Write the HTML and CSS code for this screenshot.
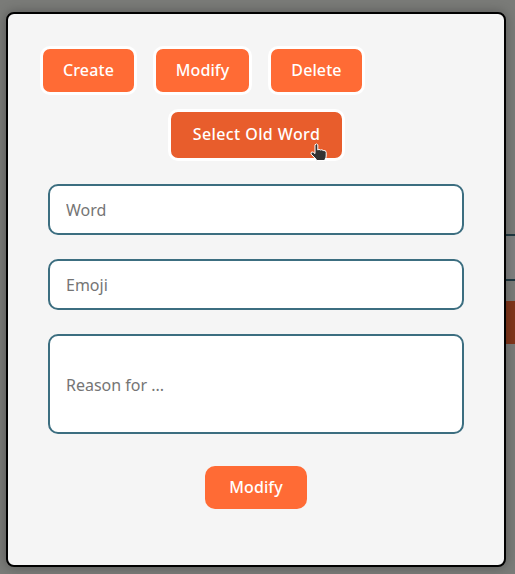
FILE: index.html
```html
<!DOCTYPE html>
<html lang="en">
<head>
<meta charset="utf-8">
<title>Modify word</title>
<link rel="stylesheet" href="styles.css">
</head>
<body>
<main class="dialog">
  <nav class="tabs">
    <button class="btn create">Create</button>
    <button class="btn modify">Modify</button>
    <button class="btn delete">Delete</button>
  </nav>
  <button class="btn select">Select Old Word
    <svg class="pointer" width="18" height="20" viewBox="0 0 18 20"><path d="M5 1.8Q6.5-.1 7.8 1.8V7Q9 5.7 10.3 7Q12 6.2 13.2 7.5Q16.2 7 16.2 9.5V13Q16.2 15 15 16.2V17.5H6.2V16.3L1.1 11.1Q.4 9.5 2 8.9Q3.4 8.9 5 10.6Z" fill="#333" stroke="#fff" stroke-linejoin="round"/></svg>
  </button>
  <form class="form">
    <input class="field" placeholder="Word">
    <input class="field" placeholder="Emoji">
    <input class="field tall" placeholder="Reason for ...">
    <button class="btn submit" type="button">Modify</button>
  </form>
</main>
<aside class="behind">
  <div class="behind-field"></div>
  <div class="behind-button"></div>
</aside>
</body>
</html>
```
FILE: styles.css
```css
* { box-sizing: border-box; }
body {
  margin: 0;
  height: 574px;
  padding: 12px 0 0 6px;
  display: flex;
  overflow: hidden;
  background: #7a7b78;
  font-family: "Noto Sans", sans-serif;
}
.dialog {
  position: relative;
  z-index: 1;
  flex: none;
  width: 500px;
  height: 555px;
  padding: 32px 40px 0;
  border: 2px solid #000;
  border-radius: 8px;
  background: #f5f5f5;
  box-shadow: 0 0 12px rgba(0, 0, 0, .3);
  display: flex;
  flex-direction: column;
  align-items: center;
}
.tabs {
  display: flex;
  gap: 16px;
  align-self: flex-start;
  margin-left: -8px;
}
.btn {
  height: 49px;
  padding: 0 0 2px;
  border: 3px solid #fff;
  border-radius: 10px;
  background: #ff6b35;
  color: #fff;
  font: 550 16px/22px "Noto Sans", sans-serif;
  letter-spacing: .1px;
  white-space: nowrap;
}
.create { width: 97px; }
.modify { width: 99px; }
.delete { width: 97px; }
.select {
  position: relative;
  width: 177px;
  height: 52px;
  margin-top: 14px;
  margin-left: 1px;
  background: #e85d2c;
  letter-spacing: .4px;
}
.pointer { position: absolute; left: 139px; top: 31px; }
.form {
  width: 416px;
  margin-top: 23px;
  display: flex;
  flex-direction: column;
  gap: 24px;
}
.field {
  width: 100%;
  height: 51px;
  padding: 0 16px;
  border: 2px solid #3c6e80;
  border-radius: 10px;
  background: #fff;
  font: 16px "Noto Sans", sans-serif;
}
.field::placeholder { color: #757575; opacity: 1; }
.tall { height: 100px; padding-top: 2px; }
.submit {
  width: 102px;
  height: 43px;
  margin-top: 8px;
  align-self: center;
  border: 0;
}
.behind { flex: 1; padding-top: 222px; }
.behind-field {
  height: 47px;
  border: solid #1e3740;
  border-width: 2px 0;
  background: #808080;
}
.behind-button { height: 43px; margin-top: 20px; background: #80361b; }
```
